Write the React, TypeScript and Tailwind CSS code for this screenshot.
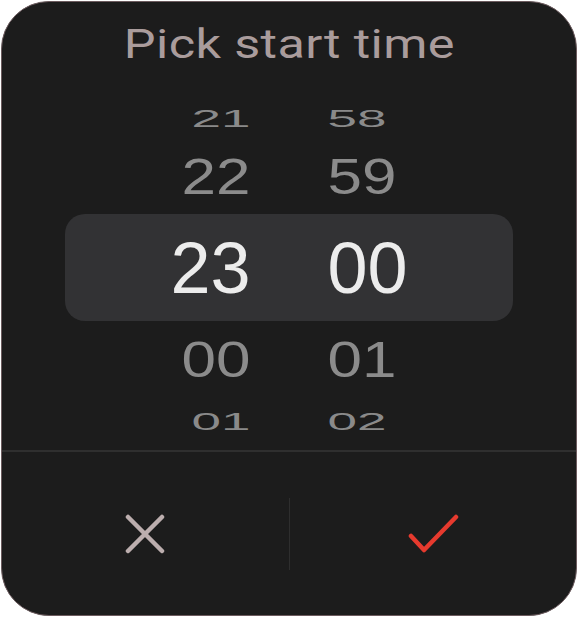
import type { ReactNode } from 'react'

type Row = {
  hour: string
  minute: string
  height: string
  text: string
  selected?: boolean
}

const rows: Row[] = [
  { hour: '21', minute: '58', height: 'h-[52px]', text: 'text-[53px] scale-y-[0.46] text-[#8a8a8a]' },
  { hour: '22', minute: '59', height: 'h-[66px]', text: 'text-[62px] scale-y-[0.8] text-[#8b8b8b]' },
  { hour: '23', minute: '00', height: 'h-[107px]', text: 'text-[72px] text-[#ececec]', selected: true },
  { hour: '00', minute: '01', height: 'h-[70px]', text: 'text-[62px] scale-y-[0.8] text-[#8b8b8b]' },
  { hour: '01', minute: '02', height: 'h-[46px]', text: 'text-[53px] scale-y-[0.46] text-[#8a8a8a]' },
]

function WheelRow({ row }: { row: Row }) {
  const cells = (
    <div className={`${row.height} grid grid-cols-2 gap-x-[77px] items-center ${row.selected ? '-mx-[63px]' : ''}`}>
      <span className={`block text-right leading-none ${row.text}`}>{row.hour}</span>
      <span className={`block text-left leading-none ${row.text}`}>{row.minute}</span>
    </div>
  )

  if (!row.selected) return cells

  return <div className="mx-[63px] my-[4px] rounded-[20px] bg-[#323234]">{cells}</div>
}

function ActionButton({ children }: { children: ReactNode }) {
  return <button className="flex flex-1 items-center justify-center h-full">{children}</button>
}

export default function App() {
  return (
    <div className="w-[579px] h-[618px] bg-white">
      <div className="ml-[1px] mt-[1px] w-[576px] h-[615px] rounded-[48px] border border-[#6c5b5e] bg-[#1c1c1c] flex flex-col overflow-hidden">
        {/* Title */}
        <h1
          className="pt-[17px] text-center text-[40px] leading-[52px] text-[#aa9c9c]"
          style={{ fontFamily: 'Roboto, "Noto Sans", sans-serif' }}
        >
          <span className="inline-block scale-x-[1.26] tracking-[0.3px]">Pick start time</span>
        </h1>

        {/* Wheel */}
        <div className="mt-[21px] flex flex-col" style={{ fontFamily: '"Liberation Sans", Arial, sans-serif' }}>
          {rows.map((row) => (
            <WheelRow key={row.hour} row={row} />
          ))}
        </div>

        {/* Actions */}
        <div className="mt-auto h-[165px] border-t-2 border-[#2f2f2f] flex items-center">
          <ActionButton>
            <svg width="40" height="40" viewBox="0 0 40 40" fill="none">
              <path d="M3 3L37 37M37 3L3 37" stroke="#bcaeae" strokeWidth="4.5" strokeLinecap="round" />
            </svg>
          </ActionButton>
          <div className="w-px h-[72px] bg-[#2e2e2e]" />
          <ActionButton>
            <svg width="52" height="40" viewBox="0 0 52 40" fill="none">
              <path d="M4 22L17 36L49 3" stroke="#e63a2e" strokeWidth="4.5" strokeLinecap="round" strokeLinejoin="round" />
            </svg>
          </ActionButton>
        </div>
      </div>
    </div>
  )
}
